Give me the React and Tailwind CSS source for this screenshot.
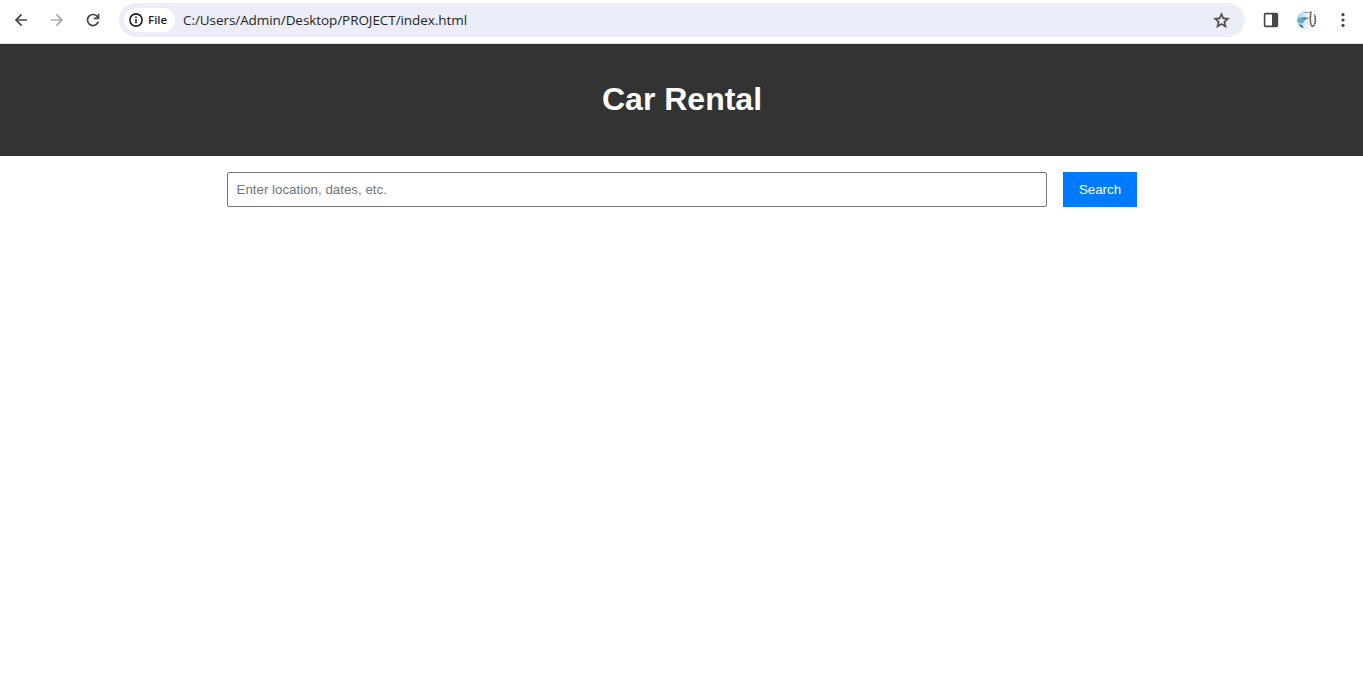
function BackIcon({ className }) {
  return (
    <svg viewBox="0 0 24 24" className={className} fill="currentColor" aria-hidden="true">
      <path d="M20 10.9H8.1l5.5-5.5L12 3.8 3.8 12l8.2 8.2 1.6-1.6-5.5-5.5H20z" />
    </svg>
  );
}

function ReloadIcon() {
  return (
    <svg viewBox="0 0 24 24" className="size-[18px]" fill="currentColor" aria-hidden="true">
      <path d="M12 20.5c-2.4 0-4.4-.8-6-2.5A8.200 8.200 0 0 1 3.500 12c0-2.400.8-4.400 2.500-6s3.600-2.500 6-2.500c1.300 0 2.400.3 3.500.8s2 1.200 2.700 2.100V3.500h2.300v7.500H13V8.700h4.300A6.100 6.100 0 0 0 12 5.800c-1.700 0-3.200.6-4.400 1.800A6 6 0 0 0 5.800 12c0 1.700.6 3.200 1.800 4.400A6 6 0 0 0 12 18.200c1.300 0 2.500-.4 3.600-1.200a6.200 6.200 0 0 0 2.200-2.900h2.400a8.300 8.300 0 0 1-3 4.600c-1.500 1.200-3.200 1.800-5.200 1.800Z" />
    </svg>
  );
}

function InfoIcon() {
  return (
    <svg viewBox="0 0 14 14" className="size-[14px] shrink-0" fill="none" stroke="currentColor" strokeWidth="1.600" aria-hidden="true">
      <circle cx="7" cy="7" r="6.100" />
      <path d="M7 6.200v4M7 3.600v1.500" />
    </svg>
  );
}

function StarIcon() {
  return (
    <svg viewBox="0 0 24 24" className="size-[19px]" fill="currentColor" aria-hidden="true">
      <path d="M22 9.240l-7.190-.62L12 2 9.190 8.630 2 9.240l5.460 4.730L5.820 21 12 17.270 18.180 21l-1.630-7.030L22 9.240zM12 15.400l-3.760 2.270 1-4.280-3.320-2.880 4.380-.38L12 6.100l1.710 4.040 4.380.38-3.320 2.880 1 4.280L12 15.400z" stroke="currentColor" strokeWidth=".5" />
    </svg>
  );
}

function SidePanelIcon() {
  return (
    <svg viewBox="0 0 16 16" className="size-4" aria-hidden="true">
      <rect x="1.600" y="1.600" width="12.800" height="12.800" rx="1" fill="none" stroke="currentColor" strokeWidth="1.600" />
      <path d="M9 1.500h5.500v13H9z" fill="currentColor" />
    </svg>
  );
}

function Avatar() {
  return (
    <svg viewBox="0 0 20 20" className="size-5" aria-hidden="true">
      <defs>
        <clipPath id="avatar-clip"><circle cx="10" cy="10" r="9.800" /></clipPath>
        <linearGradient id="sky" x1="0" y1="0" x2="1" y2="0">
          <stop offset="0" stopColor="#9fcfe2" />
          <stop offset=".65" stopColor="#d3eaf4" />
          <stop offset="1" stopColor="#ffffff" />
        </linearGradient>
      </defs>
      <g clipPath="url(#avatar-clip)">
        <path d="M0 0h20v20H0z" fill="#fff" />
        <path d="M0 0h12.500v20H0z" fill="url(#sky)" />
        <path d="M7 2.500h6" stroke="#9b9fc0" strokeWidth="1.100" />
        <path d="M0 8.500l4-1 7.500-.2v1.400L8 10l-1.500 2.500L4 13.500l-4-1.500z" fill="#6fa9c2" />
        <path d="M4.500 7.800l5-.3-2 2.200z" fill="#477f98" />
        <path d="M1 14.500l4 .3 1.500 2.400L5 18z" fill="#4e7a8c" />
        <path d="M7 12.500l4.500-3v7.500l-3.500 2z" fill="#e4f4fa" />
        <path d="M14.200 1.500c-.9 3-1 7-.8 9.500.2 3 1 5 2.200 5.500 1.600-.5 2.600-3 2.700-6 .1-2.500-.1-5-.7-6.500" fill="none" stroke="#755443" strokeWidth="1.700" strokeDasharray="2 .3" />
      </g>
    </svg>
  );
}

function MenuIcon() {
  return (
    <svg viewBox="0 0 4 16" className="h-4 w-1" fill="currentColor" aria-hidden="true">
      <circle cx="2" cy="2.700" r="1.600" />
      <circle cx="2" cy="8" r="1.600" />
      <circle cx="2" cy="13.300" r="1.600" />
    </svg>
  );
}

function BrowserBar() {
  return (
    <div className="flex h-11 items-start border-b border-[#dfe1e5] bg-white pt-[3px] text-[#474747]">
      <div className="flex h-[34px] w-[119px] shrink-0 items-center gap-[18px] pl-3">
        <BackIcon className="size-[18px]" />
        <BackIcon className="size-[18px] rotate-180 text-[#ababab]" />
        <ReloadIcon />
      </div>
      <div className="flex h-[34px] w-[1126px] shrink-0 items-center rounded-full bg-[#ebeef8] pr-[14.500px] pl-[5px] text-[#1f1f1f]">
        <div className="flex h-6 w-[51px] shrink-0 items-center gap-[5px] rounded-full bg-white pl-[5px]">
          <InfoIcon />
          <span className="font-['Open_Sans',sans-serif] text-[11.500px] leading-4 font-semibold">File</span>
        </div>
        <span className="ml-2 font-['Open_Sans',sans-serif] text-[13.500px] leading-5 tracking-[-0.070px] whitespace-nowrap">
          C:/Users/Admin/Desktop/PROJECT/index.html
        </span>
        <span className="ml-auto text-[#474747]"><StarIcon /></span>
      </div>
      <div className="flex h-[34px] flex-1 items-center pl-[18px]">
        <SidePanelIcon />
        <span className="ml-[18px]"><Avatar /></span>
        <span className="ml-6"><MenuIcon /></span>
      </div>
    </div>
  );
}

export default function App() {
  return (
    <div className="min-h-screen bg-white font-['Liberation_Sans',Arial,sans-serif]">
      <BrowserBar />
      <header className="flex h-28 items-center justify-center bg-[#333333] pb-0.5 pl-px">
        <h1 className="text-[32px] leading-9 font-bold text-white">Car Rental</h1>
      </header>
      <main className="flex justify-center gap-4 pt-4">
        <input
          type="text"
          aria-label="Search"
          placeholder="Enter location, dates, etc."
          className="h-[35px] w-[820px] rounded-[2px] border border-[#767676] pr-2 pl-[9px] text-[13.333px] placeholder:text-[#757575]"
        />
        <button type="button" className="h-[35px] w-[74px] bg-[#007bff] pl-px text-[13.333px] text-white">Search</button>
      </main>
    </div>
  );
}
